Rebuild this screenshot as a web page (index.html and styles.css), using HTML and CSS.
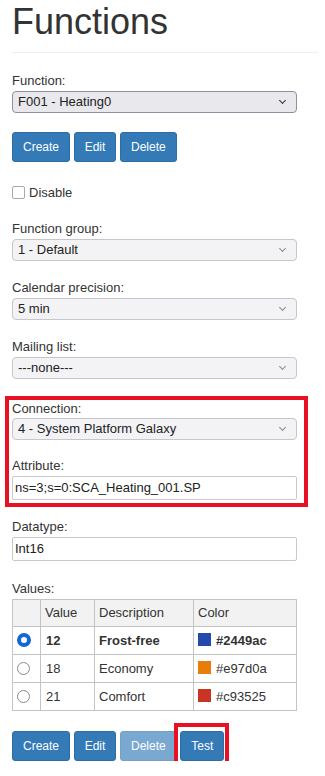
FILE: index.html
```html
<!DOCTYPE html>
<html lang="en">
  <head>
    <meta charset="UTF-8" />
    <meta name="viewport" content="width=device-width, initial-scale=1.0" />
    <title>Functions</title>
    <link rel="stylesheet" href="styles.css">
  </head>
  <body>
    <div class="page">
      <header class="page-header">
        <h1>Functions</h1>
      </header>

      <div class="group first">
        <label class="field-label" for="function">Function:</label>
        <span class="select-wrap is-hover">
          <select id="function" class="field select">
            <option>F001 - Heating0</option>
          </select>
        </span>
      </div>

      <div class="actions">
        <button type="button" class="btn">Create</button>
        <button type="button" class="btn">Edit</button>
        <button type="button" class="btn">Delete</button>
      </div>

      <label class="check">
        <input type="checkbox" class="checkbox" />
        <span>Disable</span>
      </label>

      <div class="group">
        <label class="field-label" for="function-group">Function group:</label>
        <span class="select-wrap">
          <select id="function-group" class="field select">
            <option>1 - Default</option>
          </select>
        </span>
      </div>

      <div class="group">
        <label class="field-label" for="precision">Calendar precision:</label>
        <span class="select-wrap">
          <select id="precision" class="field select">
            <option>5 min</option>
          </select>
        </span>
      </div>

      <div class="group">
        <label class="field-label" for="mailing">Mailing list:</label>
        <span class="select-wrap">
          <select id="mailing" class="field select">
            <option>---none---</option>
          </select>
        </span>
      </div>

      <div class="highlight">
        <div class="group tight">
          <label class="field-label" for="connection">Connection:</label>
          <span class="select-wrap">
            <select id="connection" class="field select">
              <option>4 - System Platform Galaxy</option>
            </select>
          </span>
        </div>
        <div class="group attr">
          <label class="field-label" for="attribute">Attribute:</label>
          <input id="attribute" class="field input" type="text" value="ns=3;s=0:SCA_Heating_001.SP" />
        </div>
      </div>

      <div class="group datatype">
        <label class="field-label" for="datatype">Datatype:</label>
        <input id="datatype" class="field input" type="text" value="Int16" />
      </div>

      <div class="group values-group">
        <div class="field-label">Values:</div>
        <table class="values">
          <colgroup>
            <col class="col-pick" />
            <col class="col-value" />
            <col class="col-desc" />
            <col class="col-color" />
          </colgroup>
          <thead>
            <tr>
              <th></th>
              <th>Value</th>
              <th>Description</th>
              <th>Color</th>
            </tr>
          </thead>
          <tbody>
            <tr class="selected">
              <td><input type="radio" name="value" class="radio" checked /></td>
              <td>12</td>
              <td>Frost-free</td>
              <td><span class="swatch" style="background: #2449ac"></span>#2449ac</td>
            </tr>
            <tr>
              <td><input type="radio" name="value" class="radio" /></td>
              <td>18</td>
              <td>Economy</td>
              <td><span class="swatch" style="background: #e97d0a"></span>#e97d0a</td>
            </tr>
            <tr>
              <td><input type="radio" name="value" class="radio" /></td>
              <td>21</td>
              <td>Comfort</td>
              <td><span class="swatch" style="background: #c93525"></span>#c93525</td>
            </tr>
          </tbody>
        </table>
      </div>

      <div class="actions bottom">
        <button type="button" class="btn">Create</button>
        <button type="button" class="btn">Edit</button>
        <button type="button" class="btn" disabled>Delete</button>
        <span class="mark"><button type="button" class="btn">Test</button></span>
      </div>
    </div>
  </body>
</html>
```

FILE: styles.css
```css
* {
  box-sizing: border-box;
}

body {
  margin: 0;
  font-family: "Liberation Sans", Arial, sans-serif;
  font-size: 13px;
  color: #333;
  background: #fff;
}

.page {
  padding: 2px 7px 0 12px;
}

.page-header {
  padding-bottom: 10px;
  border-bottom: 1px solid #eee;
}

h1 {
  margin: 0;
  font-size: 36px;
  font-weight: 500;
  line-height: 1.1;
}

/* form groups */
.group {
  margin-top: 17px;
}
.group.first {
  margin-top: 18px;
}
.group.tight {
  margin-top: 0;
}
.group.tight .field-label {
  line-height: 18px;
}
.group.attr {
  margin-top: 16px;
}
.group.datatype {
  margin-top: 10px;
}
.group.values-group {
  margin-top: 18px;
}

.field-label {
  display: block;
  line-height: 20px;
}

.field {
  display: block;
  width: 285px;
  margin: 0;
  font-family: inherit;
  font-size: 13px;
  color: #222;
}

.select-wrap {
  position: relative;
  display: block;
  width: 285px;
}
.select-wrap::after {
  content: "";
  position: absolute;
  top: 7px;
  right: 12px;
  width: 4px;
  height: 4px;
  border-right: 1.5px solid #8a8a8a;
  border-bottom: 1.5px solid #8a8a8a;
  transform: rotate(45deg);
  pointer-events: none;
}
.select-wrap.is-hover::after {
  border-color: #333;
}

.select {
  appearance: none;
  -webkit-appearance: none;
  height: 22px;
  padding: 0 20px 0 5px;
  background: #f3f3f5;
  border: 1px solid #c6c6ce;
  border-radius: 4px;
  outline: none;
}
.is-hover .select {
  background: #e9e9ed;
  border-color: #8f8f9d;
}

.input {
  height: 24px;
  padding: 0 2px;
  background: #fff;
  border: 1px solid #c8c8c8;
  border-radius: 2px;
  outline: none;
}

/* buttons */
.actions {
  margin-top: 19px;
  font-size: 13px;
}
.actions.bottom {
  margin-top: 20px;
}

.btn {
  display: inline-block;
  margin: 0;
  padding: 5px 10px;
  font-family: inherit;
  font-size: 12px;
  line-height: 1.5;
  color: #fff;
  background: #337ab7;
  border: 1px solid #2e6da4;
  border-radius: 3px;
  vertical-align: middle;
  cursor: pointer;
}
.btn:disabled {
  opacity: 0.65;
  cursor: not-allowed;
}

.mark {
  position: relative;
  display: inline-block;
  vertical-align: middle;
}
.mark::after {
  content: "";
  position: absolute;
  top: -8px;
  left: -6px;
  right: -5px;
  bottom: -4px;
  border: 4px solid #e81123;
  pointer-events: none;
}

/* checkbox */
.check {
  display: flex;
  align-items: center;
  gap: 4px;
  margin-top: 21px;
  line-height: 19px;
}
.checkbox {
  appearance: none;
  -webkit-appearance: none;
  width: 13px;
  height: 13px;
  margin: 0;
  background: #fff;
  border: 1px solid #a8a8a8;
  border-radius: 2px;
}

/* highlighted connection block */
.highlight {
  margin: 17px 10px 0 -7px;
  padding: 0 0 3px 3px;
  border: 4px solid #e81123;
}

/* values table */
.values {
  width: 285px;
  table-layout: fixed;
  border-collapse: collapse;
  border: 1px solid #c4c4c4;
}
.col-pick {
  width: 28px;
}
.col-value {
  width: 54px;
}
.col-desc {
  width: 99px;
}
.values th,
.values td {
  padding: 0 4px;
  border: 1px solid #c4c4c4;
  text-align: left;
  vertical-align: middle;
  white-space: nowrap;
}
.values th {
  height: 27px;
  font-weight: normal;
  background: #f2f2f2;
}
.values td {
  height: 28px;
}
.values .selected td {
  font-weight: bold;
}
.values td:nth-child(2) {
  padding-left: 5px;
}

.radio {
  appearance: none;
  -webkit-appearance: none;
  display: block;
  width: 13px;
  height: 13px;
  margin: 0;
  background: #fff;
  border: 1px solid #8a8a8a;
  border-radius: 50%;
}
.radio:checked {
  width: 14px;
  height: 14px;
  border: 4px solid #1467d6;
}

.swatch {
  display: inline-block;
  width: 13px;
  height: 13px;
  margin-right: 5px;
  vertical-align: -1px;
}
```
